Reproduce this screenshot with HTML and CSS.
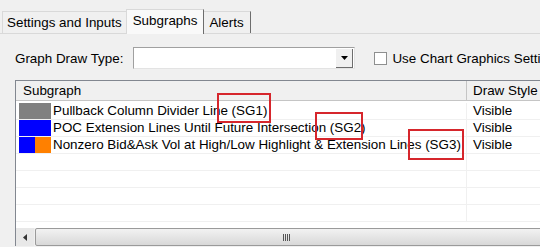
FILE: index.html
```html
<!DOCTYPE html>
<html lang="en">
<head>
  <meta charset="UTF-8">
  <title>Subgraphs</title>
  <link rel="stylesheet" href="styles.css">
</head>
<body>

  <div class="tabs">
    <div class="tab">Settings and Inputs</div>
    <div class="tab active">Subgraphs</div>
    <div class="tab last">Alerts</div>
  </div>

  <div class="panel">
    <div class="toolbar">
      <span class="label">Graph Draw Type:</span>
      <div class="combo">
        <div class="combo-btn">
          <svg width="7" height="4" viewBox="0 0 7 4"><path d="M0 0h7L3.5 4z" fill="#000"/></svg>
        </div>
      </div>
      <span class="check"></span>
      <span class="label">Use Chart Graphics Settings</span>
    </div>

    <div class="list">
      <div class="row head">
        <div class="col-name">Subgraph</div>
        <div class="col-style">Draw Style</div>
      </div>
      <div class="row">
        <div class="col-name"><span class="swatch"><i class="gray"></i></span>Pullback Column Divider Line (SG1)</div>
        <div class="col-style">Visible</div>
      </div>
      <div class="row">
        <div class="col-name"><span class="swatch"><i class="blue"></i></span>POC Extension Lines Until Future Intersection (SG2)</div>
        <div class="col-style">Visible</div>
      </div>
      <div class="row">
        <div class="col-name"><span class="swatch"><i class="blue"></i><i class="orange"></i></span>Nonzero Bid&amp;Ask Vol at High/Low Highlight &amp; Extension Lines (SG3)</div>
        <div class="col-style">Visible</div>
      </div>
      <div class="row empty"><div class="col-name"></div><div class="col-style"></div></div>
      <div class="row empty"><div class="col-name"></div><div class="col-style"></div></div>
      <div class="row empty"><div class="col-name"></div><div class="col-style"></div></div>
      <div class="row empty"><div class="col-name"></div><div class="col-style"></div></div>

      <div class="hscroll">
        <div class="arrow">
          <svg width="4" height="7" viewBox="0 0 4 7"><path d="M4 0v7L0 3.5z" fill="#333"/></svg>
        </div>
        <div class="thumb"><span class="grip"></span></div>
      </div>

      <div class="mark m1"></div>
      <div class="mark m2"></div>
      <div class="mark m3"></div>
    </div>
  </div>

</body>
</html>
```

FILE: styles.css
```css
body {
  margin: 0;
  width: 540px;
  height: 247px;
  overflow: hidden;
  background: #f0f0f0;
  font-family: "Liberation Sans", Arial, sans-serif;
  font-size: 13.4px;
  color: #000;
}
.tabs {
  display: flex;
  align-items: flex-end;
  height: 33px;
  padding-left: 2px;
  border-bottom: 1px solid #d9d9d9;
}
.tab {
  height: 21px;
  line-height: 21px;
  padding: 0 4px;
  background: #f0f0f0;
  border: 1px solid #d9d9d9;
  border-bottom: none;
  border-right-color: #a0a0a0;
  white-space: nowrap;
}
.tab.active {
  height: 24px;
  line-height: 22px;
  padding: 0 6px;
  margin: 0 -1px -1px -1px;
  background: #f9f9f9;
  position: relative;
  border-right: 1px solid #6d6d6d;
}
.tab.last {
  padding: 0 6px 0 5px;
  border-right-color: #6d6d6d;
}
.panel {
  padding: 13px 0 0 15px;
}
.toolbar {
  display: flex;
  align-items: center;
  height: 22px;
  white-space: nowrap;
}
.combo {
  flex: none;
  width: 220px;
  height: 20px;
  margin-left: 10px;
  background: #fff;
  border: 1px solid #a0a0a0;
  border-right-color: #e3e3e3;
  border-bottom-color: #e3e3e3;
  display: flex;
  justify-content: flex-end;
}
.combo-btn {
  width: 16px;
  height: 18px;
  margin: 1px;
  background: #f0f0f0;
  border-right: 1px solid #6d6d6d;
  border-bottom: 1px solid #6d6d6d;
  display: flex;
  align-items: center;
  justify-content: center;
}
.check {
  flex: none;
  width: 11px;
  height: 11px;
  margin: 0 5px 0 19px;
  background: #fff;
  border: 1px solid #8e8f8f;
}
.list {
  position: relative;
  margin-top: 11px;
  width: 560px;
  background: #fff;
  border-left: 1px solid #828790;
  border-top: 1px solid #828790;
}
.row {
  display: flex;
  height: 16px;
  line-height: 16px;
  border-bottom: 1px solid #f0f0f0;
  white-space: nowrap;
}
.row.head {
  height: 19px;
  line-height: 19px;
  background: #f0f0f0;
  border-bottom: 1px solid #c5c5c5;
  margin-bottom: 2px;
}
.col-name {
  width: 447px;
  flex: none;
  display: flex;
  align-items: center;
  padding-left: 3px;
  border-right: 1px solid #f0f0f0;
}
.head .col-name {
  padding-left: 7px;
  width: 443px;
  border-right-color: #c5c5c5;
}
.col-style {
  padding-left: 6px;
}
.swatch {
  display: flex;
  width: 32px;
  height: 16px;
  margin-right: 2px;
}
.swatch i {
  flex: 1;
}
.gray { background: #808080; }
.blue { background: #0000ff; }
.orange { background: #ff8000; }
.hscroll {
  display: flex;
  height: 18px;
  margin-top: 6px;
  background: #f0f0f0;
}
.arrow {
  width: 18px;
  display: flex;
  align-items: center;
  justify-content: center;
  background: #e8e8e8;
}
.thumb {
  flex: 1;
  margin-left: 1px;
  border: 1px solid #9a9a9a;
  border-radius: 2px;
  background: linear-gradient(#f2f2f2, #d8d8d8);
  padding-left: 247px;
  display: flex;
  align-items: center;
}
.grip {
  width: 7px;
  height: 7px;
  background: repeating-linear-gradient(90deg, #555 0 1px, transparent 1px 2px);
}
.mark {
  position: absolute;
  border: 2px solid #d6262c;
}
.m1 { left: 201px; top: 12px; width: 50px; height: 26px; }
.m2 { left: 299px; top: 31px; width: 44px; height: 24px; }
.m3 { left: 392px; top: 48px; width: 52px; height: 27px; }
```
